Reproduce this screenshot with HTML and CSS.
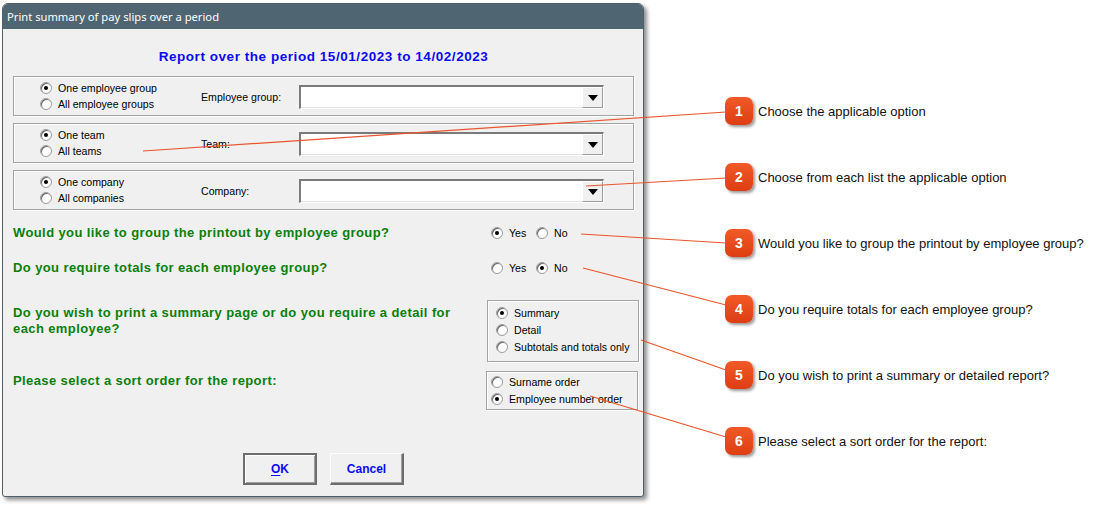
FILE: index.html
```html
<!DOCTYPE html>
<html lang="en">
<head>
<meta charset="utf-8">
<title>Print summary of pay slips over a period</title>
<link rel="stylesheet" href="styles.css">
</head>
<body>
<div class="page">
  <div class="window">
    <div class="titlebar">Print summary of pay slips over a period</div>
    <div class="client">
      <h1 class="period">Report over the period 15/01/2023 to 14/02/2023</h1>

      <div class="groupbox filter">
        <div class="radio-col">
          <div class="radio checked"><span class="dot"></span>One employee group</div>
          <div class="radio"><span class="dot"></span>All employee groups</div>
        </div>
        <span class="field-label">Employee group:</span>
        <div class="combo"><span class="combo-btn"><span class="arrow"></span></span></div>
      </div>

      <div class="groupbox filter">
        <div class="radio-col">
          <div class="radio checked"><span class="dot"></span>One team</div>
          <div class="radio"><span class="dot"></span>All teams</div>
        </div>
        <span class="field-label">Team:</span>
        <div class="combo"><span class="combo-btn"><span class="arrow"></span></span></div>
      </div>

      <div class="groupbox filter">
        <div class="radio-col">
          <div class="radio checked"><span class="dot"></span>One company</div>
          <div class="radio"><span class="dot"></span>All companies</div>
        </div>
        <span class="field-label">Company:</span>
        <div class="combo"><span class="combo-btn"><span class="arrow"></span></span></div>
      </div>

      <div class="question q-group">
        <p class="q-text">Would you like to group the printout by employee group?</p>
        <div class="yes-no">
          <div class="radio checked"><span class="dot"></span>Yes</div>
          <div class="radio"><span class="dot"></span>No</div>
        </div>
      </div>

      <div class="question q-totals">
        <p class="q-text">Do you require totals for each employee group?</p>
        <div class="yes-no">
          <div class="radio"><span class="dot"></span>Yes</div>
          <div class="radio checked"><span class="dot"></span>No</div>
        </div>
      </div>

      <div class="question q-detail">
        <p class="q-text">Do you wish to print a summary page or do you require a detail for each employee?</p>
        <div class="groupbox option-box detail-box">
          <div class="radio checked"><span class="dot"></span>Summary</div>
          <div class="radio"><span class="dot"></span>Detail</div>
          <div class="radio"><span class="dot"></span>Subtotals and totals only</div>
        </div>
      </div>

      <div class="question q-sort">
        <p class="q-text">Please select a sort order for the report:</p>
        <div class="groupbox option-box sort-box">
          <div class="radio"><span class="dot"></span>Surname order</div>
          <div class="radio checked"><span class="dot"></span>Employee number order</div>
        </div>
      </div>

      <div class="buttons">
        <button class="btn btn-default" type="button"><u>O</u>K</button>
        <button class="btn" type="button">Cancel</button>
      </div>
    </div>
  </div>

  <ol class="callouts">
    <li><span class="badge">1</span>Choose the applicable option</li>
    <li><span class="badge">2</span>Choose from each list the applicable option</li>
    <li><span class="badge">3</span>Would you like to group the printout by employee group?</li>
    <li><span class="badge">4</span>Do you require totals for each employee group?</li>
    <li><span class="badge">5</span>Do you wish to print a summary or detailed report?</li>
    <li><span class="badge">6</span>Please select a sort order for the report:</li>
  </ol>

  <!-- leader lines from each callout badge to the control it describes -->
  <svg class="leaders" width="1101" height="506" viewBox="0 0 1101 506" aria-hidden="true">
    <g stroke="#e9562b" stroke-width="1.2" fill="none">
      <line x1="143" y1="151" x2="726" y2="112"/>
      <line x1="586" y1="186" x2="726" y2="178"/>
      <line x1="581" y1="234" x2="726" y2="243"/>
      <line x1="583" y1="268" x2="726" y2="305"/>
      <line x1="641" y1="340" x2="726" y2="370"/>
      <line x1="590" y1="396" x2="726" y2="437"/>
    </g>
  </svg>
</div>
</body>
</html>
```
FILE: styles.css
```css
* { box-sizing: border-box; }

html, body {
  margin: 0;
  padding: 0;
  background: #ffffff;
}

body {
  font-family: "Liberation Sans", Arial, sans-serif;
  font-size: 10.6px;
  color: #000;
}

.page {
  position: relative;
  width: 1101px;
  height: 506px;
  display: flex;
  align-items: flex-start;
}

/* ---------- dialog window ---------- */
.window {
  margin: 3px 0 0 2px;
  width: 642px;
  height: 494px;
  border: 1px solid #4f616d;
  border-radius: 6px 6px 3px 3px;
  background: #f0f0f0;
  box-shadow: 3px 3px 4px rgba(0, 0, 0, 0.45);
  display: flex;
  flex-direction: column;
  overflow: hidden;
}

.titlebar {
  height: 25px;
  flex: none;
  background: #506572;
  color: #fff;
  font-family: "Noto Sans", "Open Sans", sans-serif;
  font-size: 11.2px;
  line-height: 25px;
  padding-left: 4px;
}

.client {
  flex: 1;
  padding: 20px 0 0 10px;
  display: flex;
  flex-direction: column;
}

.period {
  margin: 0 0 11px;
  width: 621px;
  text-align: center;
  font-size: 13.5px;
  line-height: 16px;
  font-weight: bold;
  color: #0b0bf2;
  letter-spacing: 0.55px;
}

/* ---------- group boxes ---------- */
.groupbox {
  border: 1px solid #a3a3a3;
  box-shadow: inset 1px 1px 0 #fff, 1px 1px 0 #fff;
}

.filter {
  width: 621px;
  height: 40px;
  margin-bottom: 7px;
  display: flex;
  align-items: center;
}

.radio-col {
  margin-left: 26px;
  width: 161px;
  display: flex;
  flex-direction: column;
}

.field-label {
  width: 98px;
  margin-top: 1px;
}

/* ---------- radio buttons ---------- */
.radio {
  display: flex;
  align-items: center;
  height: 16px;
  white-space: nowrap;
}

.dot {
  position: relative;
  flex: none;
  width: 12px;
  height: 12px;
  margin-right: 6px;
  border-radius: 50%;
  background: radial-gradient(circle at 60% 60%, #ffffff 45%, #e6e6e6 100%);
  border: 1px solid #9c9c9c;
  box-shadow: inset 1px 1px 0 #6a6a6a;
}

.radio.checked .dot::after {
  content: "";
  position: absolute;
  left: 3px;
  top: 3px;
  width: 4px;
  height: 4px;
  border-radius: 50%;
  background: #000;
}

/* ---------- combo box ---------- */
.combo {
  width: 305px;
  height: 24px;
  margin-top: 1px;
  background: #fff;
  border-style: solid;
  border-width: 2px 1px 1px 2px;
  border-color: #7a7a7a #fff #fff #7a7a7a;
  box-shadow: inset -1px -1px 0 #e3e3e3;
  display: flex;
  justify-content: flex-end;
}

.combo-btn {
  width: 21px;
  height: 21px;
  background: #f0f0f0;
  border-style: solid;
  border-width: 1px;
  border-color: #fff #9a9a9a #9a9a9a #fff;
  display: flex;
  align-items: center;
  justify-content: center;
}

.arrow {
  width: 0;
  height: 0;
  margin-top: 1px;
  border-left: 5px solid transparent;
  border-right: 5px solid transparent;
  border-top: 6px solid #000;
}

/* ---------- questions ---------- */
.question {
  display: flex;
  align-items: flex-start;
}

.q-text {
  margin: 0;
  width: 473px;
  flex: none;
  color: #0a7f0a;
  font-weight: bold;
  font-size: 13px;
  line-height: 16px;
  letter-spacing: 0.4px;
}

.q-group { margin-top: 8px; }
.q-totals { margin-top: 19px; }
.q-detail { margin-top: 24px; }
.q-detail .q-text { padding-top: 5px; width: 462px; margin-right: 12px; }
.q-sort { margin-top: 9px; }
.q-sort .q-text { padding-top: 2px; }

.yes-no {
  margin-left: 5px;
  display: flex;
}

.yes-no .radio:first-child { width: 45px; }

.option-box {
  display: flex;
  flex-direction: column;
}

.detail-box {
  width: 152px;
  height: 62px;
  padding: 3px 0 0 8px;
}

.detail-box .radio { height: 17px; }

.sort-box {
  width: 152px;
  height: 39px;
  padding: 1px 0 0 4px;
}

.sort-box .radio { height: 17px; }

/* ---------- buttons ---------- */
.buttons {
  margin: 43px 0 0 230px;
  display: flex;
  gap: 13px;
}

.btn {
  width: 74px;
  height: 32px;
  padding: 0;
  font-family: "Liberation Sans", Arial, sans-serif;
  font-size: 12px;
  font-weight: bold;
  color: #0a0af5;
  background: #f0f0f0;
  border-style: solid;
  border-width: 1px 2px 2px 1px;
  border-color: #fff #6d6d6d #6d6d6d #fff;
  box-shadow: inset -1px -1px 0 #a0a0a0;
}

.btn u { text-decoration-thickness: 1px; text-underline-offset: 2px; }

.btn-default {
  border: 2px solid #6d6d6d;
  box-shadow: inset 1px 1px 0 #fff, inset -1px -1px 0 #a0a0a0;
}

/* ---------- callouts ---------- */
.callouts {
  list-style: none;
  margin: 0 0 0 81px;
  padding: 97px 0 0;
  display: flex;
  flex-direction: column;
  gap: 38px;
}

.callouts li {
  height: 28px;
  display: flex;
  align-items: center;
  gap: 5px;
  font-size: 13px;
  color: #111;
  white-space: nowrap;
}

.badge {
  width: 28px;
  height: 28px;
  flex: none;
  border-radius: 7px;
  background: linear-gradient(#f15a27, #dd3d12);
  box-shadow: 2px 2px 3px rgba(0, 0, 0, 0.4);
  color: #fff;
  font-weight: bold;
  font-size: 14px;
  display: flex;
  align-items: center;
  justify-content: center;
}

.leaders {
  position: absolute;
  left: 0;
  top: 0;
  pointer-events: none;
}
```
